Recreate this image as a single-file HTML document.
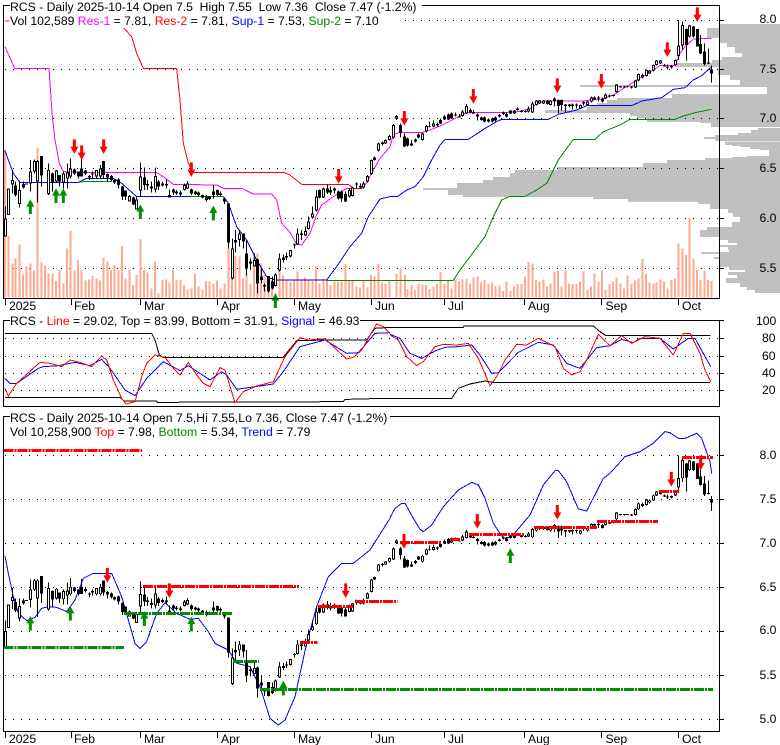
<!DOCTYPE html>
<html><head><meta charset="utf-8"><title>RCS</title>
<style>
html,body{margin:0;padding:0;background:#fff;width:780px;height:745px;overflow:hidden}
svg{display:block}
text{font-family:"Liberation Sans",Arial,sans-serif;font-size:12.2px;fill:#000;white-space:pre}
.c{shape-rendering:crispEdges}
.l{fill:none;stroke-width:1;vector-effect:non-scaling-stroke;shape-rendering:crispEdges}
.n{vector-effect:non-scaling-stroke;fill:none;shape-rendering:crispEdges}
.g{stroke:#000;stroke-width:1;stroke-dasharray:1 7;fill:none;shape-rendering:crispEdges}
.t{stroke-width:3;stroke-dasharray:10 1 2 1;fill:none;shape-rendering:crispEdges}
</style></head><body>
<svg width="780" height="745" viewBox="0 0 780 745" xmlns="http://www.w3.org/2000/svg">
<defs>
<path id="dn" d="M-4.5 0H4.5V22H12L0 44L-12 22H-4.5Z" fill="#f00"/>
<path id="up" d="M-4.5 44H4.5V22H12L0 0L-12 22H-4.5Z" fill="#008f00"/>
<g id="cs">
<g transform="scale(.3333333)">
<path class="n" stroke="#000" stroke-width="1" d="M16.5 620V710M25.5 565V645M37.5 510V580M46.5 545V590M58.5 545V622M70.5 545V565M91.5 480V575M103.5 478V520M112.5 480V608M124.5 468V560M145.5 490V585M157.5 518V575M169.5 510V548M178.5 525V560M190.5 515V565M202.5 490V565M211.5 475V535M223.5 505V525M235.5 515V535M244.5 478V530M256.5 510V525M268.5 525V540M277.5 515V535M289.5 510V535M301.5 495V535M310.5 483V535M322.5 520V545M334.5 525V545M343.5 538V552M355.5 535V565M367.5 558V600M376.5 572V600M388.5 585V605M400.5 590V615M409.5 590V628M421.5 487V590M433.5 503V570M442.5 540V570M454.5 545V578M466.5 503V578M475.5 540V570M487.5 545V560M499.5 538V565M508.5 568V592M520.5 565V585M529.5 570V585M541.5 572V588M553.5 550V572M562.5 543V567M574.5 565V585M586.5 572V585M595.5 575V590M607.5 583V595M619.5 585V605M628.5 588V600M640.5 555V595M652.5 568V588M661.5 575V590M673.5 592V612M685.5 610V745M697.5 715V838M706.5 690V757M718.5 688V740M730.5 700V745M739.5 720V827M751.5 775V810M763.5 760V800M772.5 775V880M784.5 805V850M793.5 850V875M805.5 828V877M817.5 830V868M826.5 820V860M838.5 760V815M850.5 763V787M859.5 758V780M871.5 750V772M883.5 730V745M892.5 685V735M904.5 690V720M916.5 680V708M925.5 650V688M937.5 620V655M949.5 570V635M958.5 568V595M970.5 562V594M982.5 553V582M991.5 560V585M1003.5 562V580M1015.5 572V598M1024.5 572V606M1036.5 575V606M1048.5 565V592M1057.5 560V590M1069.5 548V565M1081.5 550V565M1090.5 545V565M1102.5 525V547M1114.5 478V525M1123.5 470V482M1135.5 428V454M1147.5 424V436M1156.5 418V432M1168.5 405V422"/>
<path class="n" stroke="#000" stroke-width="3" d="M16.5 655V710M25.5 565V645M37.5 540V553M46.5 557V585M58.5 570V612M70.5 552V562M79.5 550V554M91.5 515V550M103.5 483V515M112.5 483V545M124.5 468V527M145.5 510V582M157.5 520V548M169.5 512V545M178.5 525V545M190.5 520V547M202.5 518V535M211.5 505V530M223.5 508V520M235.5 515V530M244.5 505V530M256.5 512V520M268.5 528V532M277.5 520V524M289.5 510V530M301.5 505V530M310.5 483V525M322.5 522V532M334.5 528V540M343.5 540V548M355.5 538V555M367.5 560V590M376.5 572V590M388.5 588V605M400.5 592V613M409.5 598V628M421.5 530V572M433.5 532V555M442.5 552V556M454.5 560V566M466.5 528V568M475.5 545V560M487.5 550V556M499.5 552V557M508.5 585V592M520.5 568V578M529.5 575V580M541.5 578V583M553.5 555V570M562.5 550V565M574.5 568V580M586.5 575V582M595.5 578V585M607.5 585V592M619.5 590V600M628.5 590V597M640.5 575V585M652.5 570V585M661.5 580V585M673.5 595V605M685.5 610V727M697.5 745V835M706.5 720V727M718.5 700V720M730.5 700V725M739.5 760V805M751.5 785V790M763.5 780V800M772.5 778V850M784.5 830V840M793.5 855V860M805.5 828V875M817.5 845V865M826.5 823V858M838.5 775V812M850.5 773V780M859.5 768V772M871.5 750V770M883.5 733V737M892.5 700V733M904.5 700V705M916.5 693V707M925.5 665V687M937.5 640V652M949.5 590V632M958.5 570V592M970.5 565V592M982.5 565V577M991.5 570V578M1003.5 565V572M1015.5 575V595M1024.5 575V595M1036.5 582V605M1048.5 570V590M1057.5 562V588M1069.5 551V554M1081.5 558V562M1090.5 550V562M1102.5 528V545M1114.5 480V522M1123.5 472V480M1135.5 430V452M1147.5 428V432M1156.5 420V430M1168.5 408V420"/>
<path class="n" stroke="#fff" stroke-width="1" d="M16.5 658V707M25.5 568V642M37.5 543V550M58.5 573V609M91.5 518V547M103.5 486V512M112.5 486V542M145.5 513V579M169.5 515V542M190.5 523V544M202.5 521V532M211.5 508V527M289.5 513V527M301.5 508V527M388.5 591V602M409.5 601V625M421.5 533V569M466.5 531V565M553.5 558V567M562.5 553V562M697.5 748V832M718.5 703V717M763.5 783V797M826.5 826V855M838.5 778V809M871.5 753V767M892.5 703V730M916.5 696V704M925.5 668V684M937.5 643V649M949.5 593V629M970.5 568V589M1048.5 573V587M1057.5 565V585M1090.5 553V559M1102.5 531V542M1114.5 483V519M1135.5 433V449M1156.5 423V427M1168.5 411V417"/>
</g>
<g transform="translate(390 0) scale(.3333333)">
<path class="n" stroke="#000" stroke-width="1" d="M10.5 372V415M19.5 345V360M31.5 370V412M43.5 400V441M52.5 412V440M64.5 420V438M76.5 415V428M85.5 400V414M97.5 398V422M109.5 375V397M118.5 365V382M130.5 362V382M142.5 368V380M151.5 355V372M163.5 345V360M175.5 340V360M184.5 338V357M196.5 338V350M208.5 342V352M217.5 330V350M229.5 312V342M241.5 325V340M250.5 330V342M262.5 340V362M274.5 350V362M283.5 350V368M295.5 355V368M307.5 352V367M316.5 350V365M328.5 342V352M340.5 335V345M349.5 338V352M361.5 330V342M373.5 330V342M382.5 322V332M394.5 330V338M406.5 330V338M415.5 320V337M427.5 305V339M439.5 300V317M448.5 300V312M460.5 300V312M472.5 300V314M481.5 300V317M493.5 292V320M505.5 298V340M514.5 298V332M526.5 312V336M538.5 312V322M547.5 311V328M559.5 311V325M571.5 313V327M580.5 304V316M592.5 303V317M604.5 290V307M613.5 290V300M625.5 288V305M637.5 293V308M646.5 281V297M658.5 284V292M670.5 283V290M679.5 252V278M691.5 258V263M703.5 258V263M712.5 258V262M724.5 258V265M736.5 240V264M745.5 220V244M757.5 220V235M769.5 208V230M778.5 210V222M790.5 193V214M799.5 180V197M811.5 180V192M823.5 192V200M832.5 193V208M844.5 195V205M856.5 178V197M865.5 60V180M877.5 65V150M889.5 85V182M898.5 75V112M910.5 78V112M922.5 87V140M931.5 105V162M943.5 130V197M955.5 145V192M964.5 197V248"/>
<path class="n" stroke="#000" stroke-width="3" d="M10.5 375V412M19.5 348V356M31.5 375V398M43.5 410V440M52.5 415V437M64.5 430V437M76.5 418V425M85.5 403V412M97.5 400V420M109.5 378V395M118.5 378V380M130.5 370V380M142.5 372V376M151.5 360V370M163.5 350V358M175.5 343V358M184.5 340V355M196.5 344V347M208.5 349V352M217.5 335V348M229.5 318V340M241.5 330V338M250.5 336V340M262.5 343V350M274.5 353V360M283.5 353V365M295.5 358V365M307.5 355V365M316.5 353V362M328.5 345V350M340.5 338V342M349.5 342V350M361.5 332V340M373.5 332V340M382.5 325V330M394.5 333V336M406.5 333V336M415.5 325V335M427.5 310V337M439.5 302V315M448.5 302V310M460.5 302V310M472.5 302V312M481.5 302V315M493.5 295V303M505.5 300V318M514.5 300V315M526.5 313V318M538.5 313V318M547.5 313V318M559.5 313V316M571.5 315V325M580.5 306V310M592.5 305V315M604.5 292V305M613.5 292V298M625.5 293V296M637.5 295V305M646.5 283V295M658.5 286V290M670.5 285V288M679.5 254V276M691.5 259V262M703.5 259V262M712.5 259V261M724.5 260V263M736.5 242V262M745.5 222V242M757.5 225V232M769.5 210V228M778.5 212V220M790.5 195V212M799.5 182V195M811.5 182V190M823.5 196V199M832.5 199V203M844.5 198V202M856.5 180V195M865.5 137V168M877.5 75V137M889.5 87V135M898.5 77V110M910.5 80V110M922.5 87V140M931.5 132V160M943.5 155V192M955.5 187V190M964.5 208V220"/>
<path class="n" stroke="#fff" stroke-width="1" d="M10.5 378V409M19.5 351V353M97.5 403V417M109.5 381V392M130.5 373V377M217.5 338V345M229.5 321V337M415.5 328V332M427.5 313V334M439.5 305V312M448.5 305V307M460.5 305V307M481.5 305V312M571.5 318V322M592.5 308V312M604.5 295V302M646.5 286V292M679.5 257V273M736.5 245V259M745.5 225V239M769.5 213V225M778.5 215V217M790.5 198V209M799.5 185V192M811.5 185V187M856.5 183V192M865.5 140V165M877.5 78V134M898.5 80V107"/>
</g>
</g>
</defs>

<!-- volume profile -->
<path class="c" fill="#c0c0c0" d="M720 24H780V28H720ZM707 28H780V38H707ZM720 38H780V43H720ZM727 43H780V47H727ZM735 47H780V53H735ZM742 53H780V57H742ZM722 57H780V60H722ZM712 60H780V63H712ZM675 63H780V67H675ZM718 67H780V75H718ZM730 75H780V80H730ZM740 80H780V85H740ZM580 85H780V87H580ZM767 87H780V94H767ZM672 94H780V98H672ZM617 98H780V100H617ZM607 100H780V103H607ZM597 103H780V105H597ZM590 105H780V107H590ZM587 107H780V110H587ZM545 110H780V113H545ZM630 113H780V116H630ZM637 116H780V118H637ZM647 118H780V122H647ZM700 122H780V123H700ZM711 123H780V127H711ZM758 128H780V130H758ZM751 130H780V133H751ZM738 133H780V135H738ZM715 135H780V137H715ZM704 137H780V139H704ZM715 139H780V141H715ZM725 141.5H780V145H725ZM732 145H780V146H732ZM740 146H780V147H740ZM750 147H780V149H750ZM760 149H780V150H760ZM769 150H780V156H769ZM747 156H780V157H747ZM732 157H780V158H732ZM705 158H780V160H705ZM667 160H780V163H667ZM643 163H780V167H643ZM557 167H780V170H557ZM515 170H780V173H515ZM510 173H780V177H510ZM493 177H780V180H493ZM483 180H780V183H483ZM457 183H780V188H457ZM423 188H780V190H423ZM448 190H780V195H448ZM463 195H780V197H463ZM593 197H780V199H593ZM628 199H780V202H628ZM698 202H780V204H698ZM710 204H780V209H710ZM728 209H780V213H728ZM733 213H780V217H733ZM740 217H780V222H740ZM732 222H780V227H732ZM707 227H780V230H707ZM700 230H780V237H700ZM720 237H780V240H720ZM728 240H780V243H728ZM737 243H780V245H737ZM720 245H780V247H720ZM728 247H780V250H728ZM729 250H780V252H729ZM701 252H780V254H701ZM720 254H780V257H720ZM714 257H780V259H714ZM720 259H780V267H720ZM729 267H780V270H729ZM745 270H780V272H745ZM728 272H780V275H728ZM737 275H780V278H737ZM726 278H780V283H726ZM740 283H780V287H740ZM747 287H780V290H747ZM755 290H780V293H755Z"/>

<!-- grid dots -->
<path class="g" d="M405 20.5H718M5 69.5H718M5 118.5H718M5 168.5H718M5 218.5H718M5 268.5H718"/>
<path class="g" d="M365 320.5H718M5 338.5H718M5 356.5H718M5 373.5H718M5 390.5H718"/>
<path class="g" d="M5 455.5H718M5 499.5H718M5 543.5H718M5 587.5H718M5 631.5H718M5 675.5H718M5 719.5H718"/>

<!-- volume bars -->
<g transform="scale(.3333333)">
<path class="n" stroke="#ffa98f" stroke-width="2" d="M15 450V893M25 708V893M37 790V893M47 775V893M58 733V893M69 823V893M80 800V893M91 790V893M102 812V893M113 443V893M124 788V893M135 797V893M146 820V893M157 820V893M168 843V893M179 810V893M190 850V893M201 745V893M212 693V893M223 812V893M234 780V893M245 812V893M256 842V893M267 838V893M278 828V893M289 835V893M300 842V893M311 773V893M322 785V893M333 810V893M344 795V893M355 810V893M366 738V893M377 835V893M388 810V893M399 855V893M410 825V893M421 717V893M432 810V893M443 818V893M454 865V893M465 785V893M476 880V893M487 840V893M498 838V893M508 848V893M519 808V893M530 840V893M541 840V893M552 855V893M563 868V893M574 865V893M585 822V893M596 860V893M607 870V893M618 843V893M629 845V893M640 850V893M651 842V893M662 865V893M673 850V893M685 745V893M696 745V893M707 768V893M718 770V893M729 835V893M740 820V893M751 850V893M762 763V893M772 760V893M783 790V893M794 825V893M805 830V893M816 840V893M827 880V893M838 815V893M849 825V893M860 840V893M871 845V893M882 840V893M893 815V893M904 840V893M915 832V893M926 842V893M937 843V893M948 800V893M959 850V893M970 835V893M981 840V893M992 855V893M1003 845V893M1014 845V893M1025 845V893M1036 792V893M1047 840V893M1058 840V893M1069 860V893M1080 862V893M1091 842V893M1102 862V893M1113 825V893M1124 830V893M1135 792V893M1146 848V893M1157 850V893M1168 840V893"/>
</g>
<g transform="translate(390 0) scale(.3333333)">
<path class="n" stroke="#ffa98f" stroke-width="2" d="M20 820V893M31 807V893M45 825V893M53 867V893M64 855V893M75 870V893M86 850V893M97 853V893M108 855V893M119 867V893M130 860V893M141 850V893M152 816V893M163 850V893M174 840V893M185 866V893M196 838V893M207 843V893M218 838V893M229 837V893M240 850V893M251 832V893M262 830V893M273 848V893M284 840V893M295 852V893M306 848V893M317 858V893M328 856V893M339 873V893M350 845V893M361 873V893M372 860V893M383 852V893M394 852V893M405 830V893M416 786V893M427 790V893M438 840V893M449 845V893M460 838V893M471 860V893M482 850V893M493 815V893M504 812V893M515 860V893M526 810V893M537 850V893M548 852V893M559 852V893M570 845V893M581 815V893M592 870V893M603 860V893M614 820V893M625 845V893M636 812V893M647 870V893M658 852V893M669 845V893M680 832V893M691 850V893M702 865V893M713 827V893M724 850V893M735 842V893M746 835V893M757 777V893M768 822V893M779 848V893M790 850V893M800 848V893M811 838V893M822 845V893M833 865V893M844 840V893M855 835V893M866 730V893M877 745V893M888 765V893M899 653V893M910 775V893M921 810V893M932 840V893M943 813V893M954 840V893M965 843V893"/>
</g>

<!-- top lines -->
<g transform="scale(.3333333)">
<polyline class="l" stroke="#f0f" points="15,140 44,205 147,205 150,250 157,350 165,420 178,490 190,515 240,517 468,517 490,530 520,553 650,555 670,565 725,565 760,582 815,582 830,600 845,670 870,697 890,733 905,735 930,700 950,645 965,615 1000,590 1040,565 1085,565 1100,548 1115,520 1140,475 1170,440"/>
<polyline class="l" stroke="#f00" points="372,85 395,110 410,160 430,205 530,205 540,300 550,430 565,490 580,517 850,517 870,525 905,553 1045,553 1060,565 1085,565"/>
<polyline class="l" stroke="#00f" points="15,452 25,480 40,520 60,547 235,547 260,535 340,535 365,550 410,590 670,590 685,610 710,680 740,720 770,780 800,830 825,840 980,840 1010,800 1050,740 1085,700 1105,650 1140,597 1170,590"/>
<polyline class="l" stroke="#080" points="238,547 250,545 335,545"/>
<polyline class="l" stroke="#080" points="568,589 670,589"/>
<polyline class="l" stroke="#080" points="980,841 1170,841"/>
<path d="M15 63H28" class="n" stroke="#f00" stroke-width="1"/>
</g>
<g transform="translate(390 0) scale(.3333333)">
<polyline class="l" stroke="#f0f" points="0,440 10,405 28,397 97,397 115,392 150,378 190,358 225,340 240,337 350,337 385,335 425,325 440,310 470,303 580,303 600,300 635,298 670,285 740,240 790,210 810,197 855,197 870,160 885,140 910,117 965,115"/>
<polyline class="l" stroke="#00f" points="0,590 22,590 50,570 75,560 100,530 125,480 150,435 165,418 235,418 255,405 285,385 320,365 335,358 475,358 505,343 560,330 590,317 725,317 755,303 815,293 850,268 885,263 910,240 935,227 965,200"/>
<polyline class="l" stroke="#080" points="0,841 190,841 210,810 240,770 285,710 310,650 335,600 360,589 405,589 440,570 470,550 505,480 550,418 615,418 640,395 690,375 720,358 855,358 880,348 920,337 965,328"/>
</g>

<use href="#cs"/>

<!-- top arrows -->
<g transform="scale(.3333333)">
<use href="#dn" x="223" y="418"/><use href="#dn" x="245" y="436"/><use href="#dn" x="311" y="418"/><use href="#dn" x="574" y="487"/><use href="#dn" x="1016" y="507"/>
<use href="#up" x="91" y="598"/><use href="#up" x="168" y="565"/><use href="#up" x="190" y="565"/><use href="#up" x="421" y="613"/><use href="#up" x="640" y="617"/><use href="#up" x="826" y="880"/>
</g>
<g transform="translate(390 0) scale(.3333333)">
<use href="#dn" x="43" y="333"/><use href="#dn" x="250" y="267"/><use href="#dn" x="502" y="235"/><use href="#dn" x="634" y="222"/><use href="#dn" x="832" y="127"/><use href="#dn" x="922" y="22"/>
</g>

<!-- middle pane -->
<g transform="translate(0 300) scale(.3333333)">
<polyline class="l" stroke="#000" points="15,100 455,100 465,120 478,165 490,172 850,172 890,122 985,120 1100,120 1125,85 1170,82"/>
<polyline class="l" stroke="#000" points="15,292 360,292 372,303 470,303 472,307 1030,305 1035,298 1105,297 1110,295 1170,295"/>
<polyline class="l" stroke="#00f" points="15,235 30,250 50,250 115,205 130,200 175,197 225,187 270,197 305,178 330,205 375,270 405,287 440,235 490,185 540,212 565,197 630,240 665,215 680,225 710,268 820,252 850,215 900,140 975,120 1040,160 1075,158 1125,100 1170,98"/>
<polyline class="l" stroke="#f00" points="15,265 25,288 50,250 100,205 120,187 150,190 185,200 210,180 240,187 275,200 305,168 320,180 340,240 365,295 378,312 405,305 425,230 440,190 465,165 495,172 520,205 540,225 565,187 590,225 610,250 630,260 660,203 675,210 705,308 730,275 770,258 820,245 855,170 900,113 925,120 975,116 1040,177 1060,172 1085,150 1130,72 1150,80 1170,100"/>
</g>
<g transform="translate(390 300) scale(.3333333)">
<polyline class="l" stroke="#000" points="0,82 220,82 222,78 610,78 630,95 648,107 962,106"/>
<polyline class="l" stroke="#000" points="0,295 185,295 205,265 240,252 285,243 310,247 960,247"/>
<polyline class="l" stroke="#00f" points="0,103 30,115 60,160 95,175 135,153 165,142 205,140 245,135 270,165 305,220 325,218 385,157 445,127 490,135 530,190 570,205 620,143 660,137 695,118 730,128 750,115 810,115 850,147 895,115 915,115 962,200"/>
<polyline class="l" stroke="#f00" points="0,105 25,120 50,170 80,197 100,185 135,140 160,133 200,135 235,130 265,175 300,257 320,230 345,180 380,133 410,135 445,115 495,140 520,205 545,225 570,215 590,180 625,103 660,137 695,107 725,130 765,110 810,115 850,165 880,100 900,100 930,160 945,210 962,245"/>
</g>

<!-- bottom pane -->
<g transform="translate(0 410) scale(.3333333)">
<polyline class="l" stroke="#00f" points="15,438 25,490 40,560 55,610 80,632 105,622 125,595 145,590 170,592 200,605 225,570 250,505 280,490 335,490 365,560 385,630 405,700 420,715 440,695 470,610 495,578 530,610 570,628 595,625 625,665 645,700 685,720 710,760 750,770 780,830 810,925 835,945 855,930 885,860 920,700 950,590 985,500 1025,460 1060,460 1110,420 1170,325"/>
</g>
<g transform="translate(390 410) scale(.3333333)">
<polyline class="l" stroke="#00f" points="0,323 15,295 35,280 45,280 70,325 90,358 100,365 125,345 160,290 205,240 245,217 265,225 285,265 310,340 340,385 365,380 420,315 460,225 495,182 505,182 530,215 565,297 590,303 640,205 660,190 705,140 750,125 790,100 825,65 840,68 865,85 885,85 920,70 935,85 960,155 965,190"/>
</g>

<use href="#cs" transform="translate(0 437.8) scale(1 .885)"/>

<path class="t" stroke="#f00" d="M3.5 450.5H142M143 586.5H299M300 642.5H317.5M318 606.5H353M355 601.5H397.5M400 542.5H442M450 539.5H462M469 534.5H525M534 527.5H597M597 521.5H658M659 491.5H679M682 457.5H713"/>
<path class="t" stroke="#008f00" d="M3.5 647.5H124M124 613.5H233M233 661.5H259M260 689.5H713"/>

<g transform="translate(0 410) scale(.3333333)">
<use href="#dn" x="322" y="474"/><use href="#dn" x="508" y="520"/><use href="#dn" x="1037" y="520"/>
<use href="#up" x="91" y="618"/><use href="#up" x="211" y="588"/><use href="#up" x="433" y="604"/><use href="#up" x="574" y="620"/><use href="#up" x="850" y="812"/>
</g>
<g transform="translate(390 410) scale(.3333333)">
<use href="#dn" x="42" y="372"/><use href="#dn" x="262" y="312"/><use href="#dn" x="502" y="285"/><use href="#dn" x="844" y="186"/><use href="#dn" x="932" y="137"/>
<use href="#up" x="361" y="415"/>
</g>

<!-- frames -->
<path class="c" stroke="#000" stroke-width="1" fill="none" d="M10 5.5H3.5V298.5H719.5V5.5H422M10 320.5H3.5V406.5H719.5V320.5H360M10 416.5H3.5V731.5H719.5V416.5H390
M720 20.5H724M720 69.5H724M720 118.5H724M720 168.5H724M720 218.5H724M720 268.5H724
M720 320.5H724M720 338.5H724M720 356.5H724M720 373.5H724M720 390.5H724
M720 455.5H724M720 499.5H724M720 543.5H724M720 587.5H724M720 631.5H724M720 675.5H724M720 719.5H724
M5.5 298V305M71.5 298V305M140.5 298V305M217.5 298V305M294.5 298V305M371.5 298V305M444.5 298V305M524.5 298V305M601.5 298V305M678.5 298V305
M5.5 731V738M71.5 731V738M140.5 731V738M217.5 731V738M294.5 731V738M371.5 731V738M444.5 731V738M524.5 731V738M601.5 731V738M678.5 731V738"/>

<!-- text -->
<text x="10" y="11">RCS - Daily 2025-10-14 Open 7.5  High 7.55  Low 7.36  Close 7.47 (-1.2%)</text>
<text x="10" y="25">Vol 102,589 <tspan style="fill:#f0f">Res-1</tspan> = 7.81, <tspan style="fill:#f00">Res-2</tspan> = 7.81, <tspan style="fill:#00f">Sup-1</tspan> = 7.53, <tspan style="fill:#080">Sup-2</tspan> = 7.10</text>
<text x="10" y="325">RCS - <tspan style="fill:#f00">Line</tspan> = 29.02, Top = 83.99, Bottom = 31.91, <tspan style="fill:#00f">Signal</tspan> = 46.93</text>
<text x="10" y="422">RCS - Daily 2025-10-14 Open 7.5,Hi 7.55,Lo 7.36, Close 7.47 (-1.2%)</text>
<text x="10" y="436">Vol 10,258,900 <tspan style="fill:#f00">Top</tspan> = 7.98, <tspan style="fill:#080">Bottom</tspan> = 5.34, <tspan style="fill:#00f">Trend</tspan> = 7.79</text>

<g>
<text x="9" y="310">2025</text><text x="74" y="310">Feb</text><text x="144" y="310">Mar</text><text x="221" y="310">Apr</text><text x="298" y="310">May</text><text x="375" y="310">Jun</text><text x="448" y="310">Jul</text><text x="528" y="310">Aug</text><text x="605.5" y="310">Sep</text><text x="682" y="310">Oct</text>
<text x="9" y="743">2025</text><text x="74" y="743">Feb</text><text x="144" y="743">Mar</text><text x="221" y="743">Apr</text><text x="298" y="743">May</text><text x="375" y="743">Jun</text><text x="448" y="743">Jul</text><text x="528" y="743">Aug</text><text x="605.5" y="743">Sep</text><text x="682" y="743">Oct</text>
</g>
<g>
<text x="759.5" y="23">8.0</text><text x="759.5" y="73">7.5</text><text x="759.5" y="122">7.0</text><text x="759.5" y="172">6.5</text><text x="759.5" y="222">6.0</text><text x="759.5" y="272">5.5</text>
<text x="756" y="325">100</text><text x="762" y="342">80</text><text x="762" y="360">60</text><text x="762" y="377">40</text><text x="762" y="394">20</text>
<text x="759.5" y="459">8.0</text><text x="759.5" y="503">7.5</text><text x="759.5" y="547">7.0</text><text x="759.5" y="591">6.5</text><text x="759.5" y="634">6.0</text><text x="759.5" y="679">5.5</text><text x="759.5" y="723">5.0</text>
</g>
</svg>
</body></html>
